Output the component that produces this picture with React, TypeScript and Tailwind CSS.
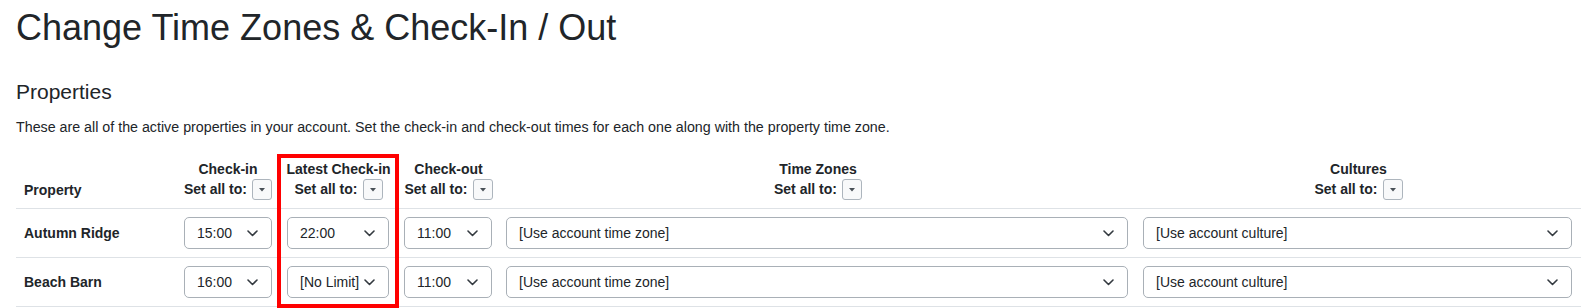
import React from 'react';

interface Property {
  name: string;
  checkIn: string;
  latest: string;
  checkOut: string;
  timeZone: string;
  culture: string;
}

const properties: Property[] = [
  {
    name: 'Autumn Ridge',
    checkIn: '15:00',
    latest: '22:00',
    checkOut: '11:00',
    timeZone: '[Use account time zone]',
    culture: '[Use account culture]',
  },
  {
    name: 'Beach Barn',
    checkIn: '16:00',
    latest: '[No Limit]',
    checkOut: '11:00',
    timeZone: '[Use account time zone]',
    culture: '[Use account culture]',
  },
];

// grid rows are placed explicitly so the highlight box can share the column
const rowClasses = ['row-start-2', 'row-start-3'];

const Chevron = () => (
  <svg width="11" height="7" viewBox="0 0 11 7" fill="none" className="shrink-0">
    <path d="M1 1l4.5 4.5L10 1" stroke="#343a40" strokeWidth="1.6" strokeLinecap="round" strokeLinejoin="round" />
  </svg>
);

const Select = ({ value }: { value: string }) => (
  <div className="flex h-8 w-full items-center justify-between rounded-[5px] border border-[#a9b0b7] bg-white pl-3 pr-[13px] text-[14px] text-[#212529]">
    <span className="whitespace-nowrap">{value}</span>
    <Chevron />
  </div>
);

const SetAll = () => (
  <div className="flex h-[21px] items-center justify-center gap-[5px] whitespace-nowrap">
    <span>Set all to:</span>
    <span className="flex h-[21px] w-5 items-center justify-center rounded-[3px] border border-[#adb5bd] bg-[#f8f9fa]">
      <svg width="6" height="4" viewBox="0 0 6 4">
        <path d="M0 0h6L3 3.5z" fill="#495057" />
      </svg>
    </span>
  </div>
);

const HeadCell = ({ title, className = '' }: { title: string; className?: string }) => (
  <div className={`row-start-1 flex flex-col items-center border-b border-[#dee2e6] pt-[5px] pb-2 font-bold ${className}`}>
    <div className="h-5 leading-5 whitespace-nowrap">{title}</div>
    <SetAll />
  </div>
);

export default function App() {
  return (
    <div className="min-h-screen bg-white pl-4 font-['Liberation_Sans',Arial,sans-serif] text-[#212529]">
      <h1 className="mt-[6px] text-[36px] leading-[1.2] font-normal">Change Time Zones &amp; Check-In / Out</h1>

      <h2 className="mt-[30px] text-[21px] leading-[1.2] font-normal">Properties</h2>
      <p className="mt-[13px] text-[14.25px] leading-[21px]">
        These are all of the active properties in your account. Set the check-in and check-out times for each one along with the property time zone.
      </p>

      {/* Properties grid */}
      <div className="mt-4 grid grid-cols-[160px_104px_117px_103px_636px_445px] text-[14px]">
        <div className="col-start-1 row-start-1 flex items-end border-b border-[#dee2e6] px-2 pb-2 leading-5 font-bold">Property</div>
        <HeadCell title="Check-in" className="col-start-2" />
        <HeadCell title="Latest Check-in" className="col-start-3" />
        <HeadCell title="Check-out" className="col-start-4" />
        <HeadCell title="Time Zones" className="col-start-5" />
        <HeadCell title="Cultures" className="col-start-6" />

        {properties.map((p, i) => (
          <React.Fragment key={p.name}>
            <div className={`${rowClasses[i]} col-start-1 flex items-center border-b border-[#dee2e6] px-2 py-2 font-bold whitespace-nowrap`}>
              {p.name}
            </div>
            <div className={`${rowClasses[i]} col-start-2 flex items-center border-b border-[#dee2e6] px-2 py-2`}>
              <Select value={p.checkIn} />
            </div>
            <div className={`${rowClasses[i]} col-start-3 flex items-center border-b border-[#dee2e6] pl-[7px] pr-2 py-2`}>
              <Select value={p.latest} />
            </div>
            <div className={`${rowClasses[i]} col-start-4 flex items-center border-b border-[#dee2e6] pl-[7px] pr-2 py-2`}>
              <Select value={p.checkOut} />
            </div>
            <div className={`${rowClasses[i]} col-start-5 flex items-center border-b border-[#dee2e6] pl-[6px] pr-2 py-2`}>
              <Select value={p.timeZone} />
            </div>
            <div className={`${rowClasses[i]} col-start-6 flex items-center border-b border-[#dee2e6] pl-[7px] pr-[9px] py-2`}>
              <Select value={p.culture} />
            </div>
          </React.Fragment>
        ))}

        {/* highlight around the Latest Check-in column */}
        <div className="pointer-events-none col-start-3 row-start-1 row-end-4 -ml-[3px] -mr-[2px] -mb-px border-4 border-[#ff0000]" />
      </div>
    </div>
  );
}
